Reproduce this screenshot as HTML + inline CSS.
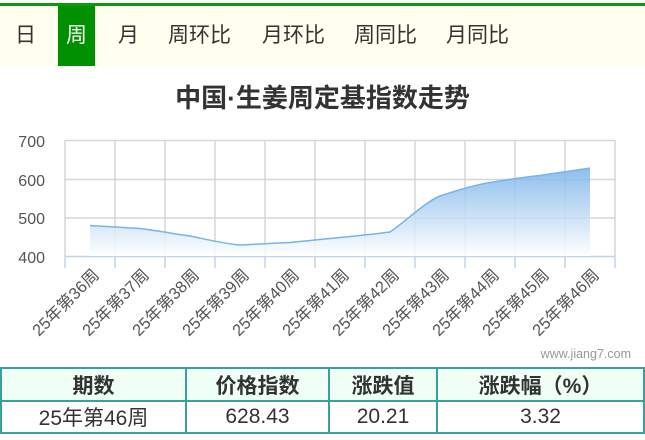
<!DOCTYPE html>
<html><head><meta charset="utf-8"><style>
body{margin:0;width:645px;height:440px;background:#fff;font-family:"Liberation Sans","Noto Sans CJK SC",sans-serif;overflow:hidden;position:relative}
.top{position:absolute;left:0;top:3px;width:645px;height:3px;background:#0a9a0a}
.nav{position:absolute;left:0;top:6px;width:645px;height:60px;background:#fffff0}
.nav span{position:absolute;top:0;height:60px;line-height:60px;font-size:21px;color:#333}
.nav .act{background:#009000;color:#fff;text-align:center}
h1{position:absolute;top:79px;left:0;width:645px;margin:0;text-align:center;font-size:26px;font-weight:bold;color:#333;line-height:38px}
table{position:absolute;left:0;top:367px;width:645px;border-collapse:collapse;font-size:21px;color:#333}
td{border:2px solid #3aa09a;text-align:center;padding:0;height:30px}
tr.h td{background:#f0fff6;font-weight:bold;height:31px}
</style></head><body>
<div class="top"></div>
<div class="nav">
<span style="left:15px">日</span>
<span class="act" style="left:58px;width:37px">周</span>
<span style="left:118px">月</span>
<span style="left:168px">周环比</span>
<span style="left:262px">月环比</span>
<span style="left:354px">周同比</span>
<span style="left:446px">月同比</span>
</div>
<h1>中国·生姜周定基指数走势</h1>
<svg style="position:absolute;left:0;top:0" width="645" height="365">
<defs><linearGradient id="g" x1="0" y1="0" x2="0" y2="1"><stop offset="0" stop-color="#7ab2ea"/><stop offset="1" stop-color="#ffffff"/></linearGradient></defs>
<g stroke="#d6d6d6" stroke-width="1.5">
<line x1="65" y1="140.5" x2="615" y2="140.5"/><line x1="65" y1="179.5" x2="615" y2="179.5"/><line x1="65" y1="218" x2="615" y2="218"/>
<line x1="65" y1="140" x2="65" y2="256"/><line x1="115" y1="140" x2="115" y2="256"/><line x1="165" y1="140" x2="165" y2="256"/><line x1="215" y1="140" x2="215" y2="256"/><line x1="265" y1="140" x2="265" y2="256"/><line x1="315" y1="140" x2="315" y2="256"/><line x1="365" y1="140" x2="365" y2="256"/><line x1="415" y1="140" x2="415" y2="256"/><line x1="465" y1="140" x2="465" y2="256"/><line x1="515" y1="140" x2="515" y2="256"/><line x1="565" y1="140" x2="565" y2="256"/><line x1="615" y1="140" x2="615" y2="256"/>
</g>
<g stroke="#c0d4ea" stroke-width="1.5">
<line x1="65" y1="256.5" x2="615" y2="256.5"/>
<line x1="65" y1="256" x2="65" y2="268"/><line x1="115" y1="256" x2="115" y2="268"/><line x1="165" y1="256" x2="165" y2="268"/><line x1="215" y1="256" x2="215" y2="268"/><line x1="265" y1="256" x2="265" y2="268"/><line x1="315" y1="256" x2="315" y2="268"/><line x1="365" y1="256" x2="365" y2="268"/><line x1="415" y1="256" x2="415" y2="268"/><line x1="465" y1="256" x2="465" y2="268"/><line x1="515" y1="256" x2="515" y2="268"/><line x1="565" y1="256" x2="565" y2="268"/><line x1="615" y1="256" x2="615" y2="268"/>
</g>
<path d="M90,225.5 C115,227 125,227.5 140,228.5 C160,231 175,234 190,236 C205,239 225,244 240,245 C260,244 275,243 290,242.5 C305,241 325,239 340,237.5 C355,236 375,234 390,232 C405,222 425,202 440,196 C455,191 475,185 490,182.5 C505,180 525,177 540,175.5 C555,173 575,170.5 590,168 L590,256 L90,256 Z" fill="url(#g)" opacity="0.85"/>
<path d="M90,225.5 C115,227 125,227.5 140,228.5 C160,231 175,234 190,236 C205,239 225,244 240,245 C260,244 275,243 290,242.5 C305,241 325,239 340,237.5 C355,236 375,234 390,232 C405,222 425,202 440,196 C455,191 475,185 490,182.5 C505,180 525,177 540,175.5 C555,173 575,170.5 590,168" fill="none" stroke="#7ab2ea" stroke-width="1.5"/>
<g font-size="16" fill="#555" text-anchor="end" font-family="Liberation Sans,sans-serif">
<text x="45" y="147">700</text><text x="45" y="186">600</text><text x="45" y="224">500</text><text x="45" y="263">400</text>
</g>
<g font-size="16.5" fill="#555" text-anchor="end" font-family="Liberation Sans,'Noto Sans CJK SC',sans-serif">
<text transform="translate(100,276) rotate(-45)">25年第36周</text>
<text transform="translate(150,276) rotate(-45)">25年第37周</text>
<text transform="translate(200,276) rotate(-45)">25年第38周</text>
<text transform="translate(250,276) rotate(-45)">25年第39周</text>
<text transform="translate(300,276) rotate(-45)">25年第40周</text>
<text transform="translate(350,276) rotate(-45)">25年第41周</text>
<text transform="translate(400,276) rotate(-45)">25年第42周</text>
<text transform="translate(450,276) rotate(-45)">25年第43周</text>
<text transform="translate(500,276) rotate(-45)">25年第44周</text>
<text transform="translate(550,276) rotate(-45)">25年第45周</text>
<text transform="translate(600,276) rotate(-45)">25年第46周</text>
</g>
<text x="631" y="358" font-size="12.5" fill="#999" text-anchor="end">www.jiang7.com</text>
</svg>
<table>
<tr class="h"><td style="width:183px">期数</td><td style="width:141px">价格指数</td><td style="width:106px">涨跌值</td><td>涨跌幅（%）</td></tr>
<tr><td>25年第46周</td><td>628.43</td><td>20.21</td><td>3.32</td></tr>
</table>
</body></html>
